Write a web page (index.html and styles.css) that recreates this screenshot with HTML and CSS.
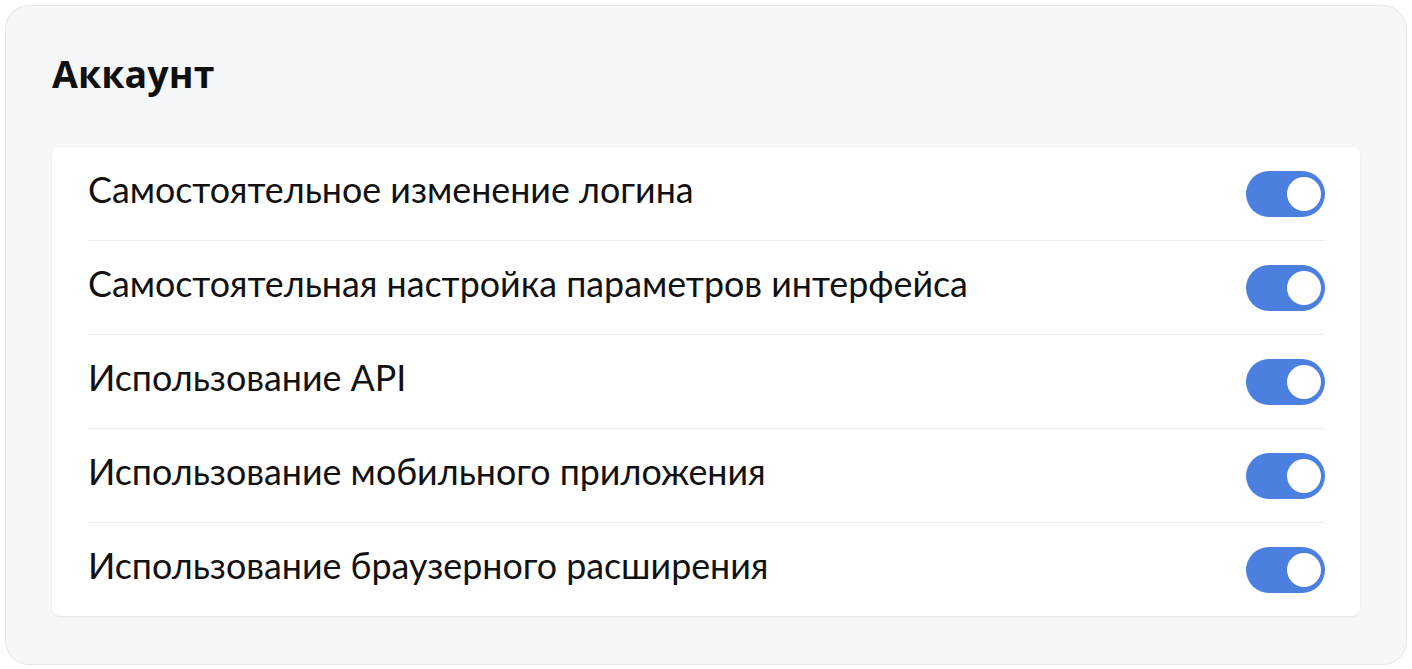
FILE: index.html
```html
<!DOCTYPE html>
<html lang="ru">
<head>
<meta charset="utf-8">
<link rel="stylesheet" href="styles.css">
</head>
<body>
<section class="panel">
  <h1 class="title">Аккаунт</h1>
  <div class="card">
    <div class="row"><span class="label">Самостоятельное изменение логина</span><span class="toggle"><span class="knob"></span></span></div>
    <div class="row"><span class="label">Самостоятельная настройка параметров интерфейса</span><span class="toggle"><span class="knob"></span></span></div>
    <div class="row"><span class="label">Использование API</span><span class="toggle"><span class="knob"></span></span></div>
    <div class="row"><span class="label">Использование мобильного приложения</span><span class="toggle"><span class="knob"></span></span></div>
    <div class="row"><span class="label">Использование браузерного расширения</span><span class="toggle"><span class="knob"></span></span></div>
  </div>
</section>
</body>
</html>
```
FILE: styles.css
```css
html, body { margin: 0; padding: 0; background: #ffffff; }
body { font-family: Lato, "Noto Sans", sans-serif; color: #111; }
.panel {
  box-sizing: border-box;
  margin: 5px;
  width: 1402px;
  height: 660px;
  background: #f6f7f9;
  border: 1px solid #e6e7ea;
  border-radius: 24px;
  padding: 46px 46px 46px 46px;
}
.title {
  margin: 0 0 51px 0;
  font-family: "Open Sans", Lato, sans-serif;
  font-size: 37.5px;
  font-weight: 700;
  line-height: 44px;
  letter-spacing: 0.1px;
  color: #0f0f10;
}
.card {
  background: #fff;
  border-radius: 8px;
  box-shadow: 0 1px 2px rgba(0,0,0,0.08);
  padding: 0 35px 0 36px;
}
.row {
  display: flex;
  align-items: center;
  justify-content: space-between;
  height: 93px;
  border-bottom: 1px solid #ececee;
}
.row:last-child { border-bottom: none; }
.label { font-size: 35.8px; line-height: 43px; padding-bottom: 8px; }
.toggle {
  width: 79px;
  height: 46px;
  border-radius: 23px;
  background: #4b7fe0;
  display: flex;
  align-items: center;
  justify-content: flex-end;
  padding: 0 4px;
  box-sizing: border-box;
}
.knob {
  width: 34px;
  height: 34px;
  border-radius: 50%;
  background: #fff;
}
```
